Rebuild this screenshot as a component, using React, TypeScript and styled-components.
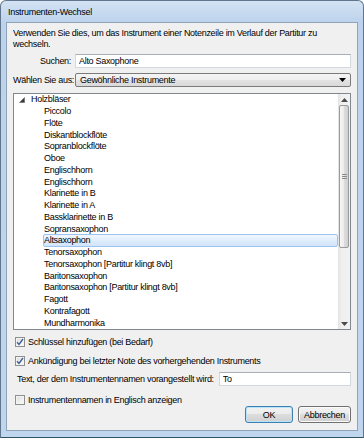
import React from 'react';
import styled, { createGlobalStyle } from 'styled-components';

const Global = createGlobalStyle`
  html, body { margin: 0; padding: 0; background: #fff; }
  body {
    font-family: "Liberation Sans", Arial, sans-serif;
    font-size: 9px;
    letter-spacing: -0.3px;
    color: #000;
  }
  * { box-sizing: border-box; }
`;

const Window = styled.div`
  width: 364px;
  height: 438px;
  border: 1px solid #61768c;
  border-bottom-color: #2d5461;
  border-radius: 6px 6px 0 0;
  background: linear-gradient(180deg, #d3e2f3 0px, #bdd3ec 21px, #c0d6ee 100%);
  display: flex;
  flex-direction: column;
  overflow: hidden;
`;

const TitleBar = styled.div`
  height: 21px;
  flex: none;
  display: flex;
  align-items: center;
  padding-left: 7px;
  padding-top: 1px;
  color: #000;
`;

const Body = styled.div`
  flex: 1;
  margin: 0 5px 6px 5px;
  background: #f0f0f0;
  border: 1px solid #8fa3b9;
  padding: 5px 6px 7px 6px;
  display: flex;
  flex-direction: column;
`;

const Description = styled.div`
  line-height: 11px;
  height: 22px;
`;

const FieldRow = styled.div<{ $top: number }>`
  display: grid;
  grid-template-columns: 58px 1fr;
  column-gap: 4px;
  align-items: center;
  margin-top: ${p => p.$top}px;
  height: 14px;
`;

const FieldLabel = styled.div`
  text-align: right;
  white-space: nowrap;
`;

const TextInput = styled.input`
  height: 14px;
  width: 100%;
  margin: 0;
  border: 1px solid #d3d8df;
  border-top-color: #a9adb4;
  background: #fff;
  padding: 0 0 0 3px;
  font: inherit;
  letter-spacing: inherit;
  color: #000;
  outline: none;
`;

const Combo = styled.div`
  height: 14px;
  border: 1px solid #7b7b7b;
  border-radius: 2px;
  background: linear-gradient(180deg, #f4f4f4 0%, #eeeeee 50%, #e2e2e2 51%, #d9d9d9 100%);
  display: flex;
  align-items: center;
  justify-content: space-between;
  padding: 0 4px 0 4px;
  white-space: nowrap;
`;

const Tree = styled.div`
  margin-top: 6px;
  height: 237px;
  border: 1px solid #828790;
  background: #fff;
  display: flex;
`;

const TreeList = styled.div`
  flex: 1;
  display: grid;
  grid-template-rows: repeat(20, minmax(0, 1fr));
  min-width: 0;
`;

const TreeRow = styled.div<{ $indent: number }>`
  display: flex;
  align-items: center;
  padding-left: ${p => p.$indent}px;
  white-space: nowrap;
  min-width: 0;
  min-height: 0;
`;

const Expander = styled.svg`
  flex: none;
  width: 6px;
  height: 6px;
  margin-right: 5px;
  margin-top: 1px;
`;

const ItemLabel = styled.span<{ $selected?: boolean }>`
  flex: 1;
  height: 13px;
  line-height: 11px;
  border: 1px solid ${p => (p.$selected ? '#9cc3ef' : 'transparent')};
  border-radius: 2px;
  background: ${p =>
    p.$selected ? 'linear-gradient(180deg, #f1f7fe 0%, #dcebfc 60%, #d2e5fb 100%)' : 'transparent'};
  padding-left: 0;
`;

const ScrollBar = styled.div`
  width: 12px;
  flex: none;
  display: flex;
  flex-direction: column;
  background: linear-gradient(90deg, #e2e2e2 0px, #efefef 3px, #f2f2f2 100%);
`;

const ScrollButton = styled.div`
  height: 11px;
  flex: none;
  display: flex;
  align-items: center;
  justify-content: center;
`;

const Thumb = styled.div`
  height: 143px;
  flex: none;
  margin: 0 1px;
  border: 1px solid #9a9a9a;
  border-radius: 2px;
  background: linear-gradient(90deg, #f7f7f7 0%, #ececec 45%, #dcdcdc 55%, #cfcfcf 100%);
  display: flex;
  align-items: center;
  justify-content: center;
`;

const Spacer = styled.div`
  flex: 1;
`;

const CheckRow = styled.div<{ $top: number }>`
  display: flex;
  align-items: center;
  height: 12px;
  margin-top: ${p => p.$top}px;
  white-space: nowrap;
`;

const CheckBox = styled.span`
  width: 10px;
  height: 10px;
  flex: none;
  margin: 0 3px 0 2px;
  border: 1px solid #8e8f8f;
  background: linear-gradient(135deg, #d9d9d9 0%, #f0f0f0 60%, #ffffff 100%);
  box-shadow: inset 0 0 0 1px #f4f4f4;
  display: flex;
  align-items: center;
  justify-content: center;
`;

const PrefixRow = styled.div`
  display: flex;
  align-items: center;
  height: 14px;
  margin-top: 5px;
  padding-left: 4px;
  gap: 4px;
  white-space: nowrap;
`;

const PrefixInput = styled(TextInput)`
  width: auto;
  flex: 1;
  margin-left: 1px;
`;

const ButtonRow = styled.div`
  display: flex;
  justify-content: flex-end;
  gap: 5px;
`;

const Button = styled.button<{ $default?: boolean; $w: number }>`
  width: ${p => p.$w}px;
  height: 17px;
  margin: 0;
  padding: 0;
  font: inherit;
  letter-spacing: inherit;
  color: #000;
  border: 1px solid ${p => (p.$default ? '#3c7fb1' : '#707070')};
  border-radius: 3px;
  box-shadow: inset 0 0 0 1px ${p => (p.$default ? '#b7e3fb' : '#fbfbfb')};
  background: linear-gradient(180deg, #f2f2f2 0%, #ebebeb 49%, #dddddd 50%, #cfcfcf 100%);
`;

const items = [
  'Piccolo',
  'Flöte',
  'Diskantblockflöte',
  'Sopranblockflöte',
  'Oboe',
  'Englischhorn',
  'Englischhorn',
  'Klarinette in B',
  'Klarinette in A',
  'Bassklarinette in B',
  'Sopransaxophon',
  'Altsaxophon',
  'Tenorsaxophon',
  'Tenorsaxophon [Partitur klingt 8vb]',
  'Baritonsaxophon',
  'Baritonsaxophon [Partitur klingt 8vb]',
  'Fagott',
  'Kontrafagott',
  'Mundharmonika',
];

const Check = () => (
  <svg width="8" height="8" viewBox="0 0 8 8">
    <path d="M1 4.2 L3 6.4 L7 1" fill="none" stroke="#3f5f99" strokeWidth="1.4" />
  </svg>
);

export default function App() {
  return (
    <>
      <Global />
      <Window>
        <TitleBar>Instrumenten-Wechsel</TitleBar>
        <Body>
          <Description>
            Verwenden Sie dies, um das Instrument einer Notenzeile im Verlauf der Partitur zu
            <br />
            wechseln.
          </Description>
          <FieldRow $top={4}>
            <FieldLabel>Suchen:</FieldLabel>
            <TextInput readOnly defaultValue="Alto Saxophone" />
          </FieldRow>
          <FieldRow $top={5}>
            <FieldLabel>Wählen Sie aus:</FieldLabel>
            <Combo>
              <span>Gewöhnliche Instrumente</span>
              <svg width="7" height="4" viewBox="0 0 7 4">
                <path d="M0 0 H7 L3.5 4 Z" fill="#000" />
              </svg>
            </Combo>
          </FieldRow>
          <Tree>
            <TreeList>
              <TreeRow $indent={5}>
                <Expander viewBox="0 0 6 6">
                  <path d="M5.5 0.5 V5.5 H0.5 Z" fill="#3a3a3a" stroke="#5a5a5a" strokeWidth="0.5" />
                </Expander>
                <ItemLabel>Holzbläser</ItemLabel>
              </TreeRow>
              {items.map((name, i) => (
                <TreeRow key={i} $indent={29}>
                  <ItemLabel $selected={name === 'Altsaxophon'}>{name}</ItemLabel>
                </TreeRow>
              ))}
            </TreeList>
            <ScrollBar>
              <ScrollButton>
                <svg width="7" height="4" viewBox="0 0 7 4">
                  <path d="M0 4 H7 L3.5 0 Z" fill="#4a4a4a" />
                </svg>
              </ScrollButton>
              <Thumb>
                <svg width="5" height="5" viewBox="0 0 5 5">
                  <path d="M0 0.5 H5 M0 2.5 H5 M0 4.5 H5" stroke="#8a8a8a" strokeWidth="1" />
                </svg>
              </Thumb>
              <Spacer />
              <ScrollButton>
                <svg width="7" height="4" viewBox="0 0 7 4">
                  <path d="M0 0 H7 L3.5 4 Z" fill="#4a4a4a" />
                </svg>
              </ScrollButton>
            </ScrollBar>
          </Tree>
          <CheckRow $top={6}>
            <CheckBox>
              <Check />
            </CheckBox>
            Schlüssel hinzufügen (bei Bedarf)
          </CheckRow>
          <CheckRow $top={7}>
            <CheckBox>
              <Check />
            </CheckBox>
            Ankündigung bei letzter Note des vorhergehenden Instruments
          </CheckRow>
          <PrefixRow>
            <span>Text, der dem Instrumentennamen vorangestellt wird:</span>
            <PrefixInput readOnly defaultValue="To" />
          </PrefixRow>
          <CheckRow $top={8}>
            <CheckBox />
            Instrumentennamen in Englisch anzeigen
          </CheckRow>
          <ButtonRow>
            <Button $default $w={48}>OK</Button>
            <Button $w={53}>Abbrechen</Button>
          </ButtonRow>
        </Body>
      </Window>
    </>
  );
}
